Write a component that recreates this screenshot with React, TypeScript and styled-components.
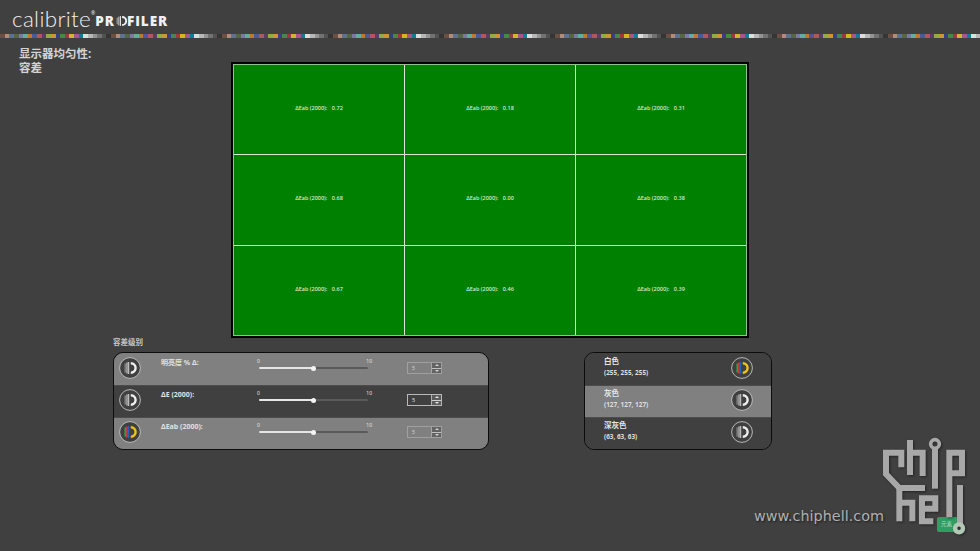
import React from 'react'
import styled, { createGlobalStyle } from 'styled-components'

const GlobalStyle = createGlobalStyle`
  html, body {
    margin: 0;
    padding: 0;
    height: 100%;
    background: #404040;
    overflow: hidden;
  }
  * {
    box-sizing: border-box;
  }
`

const CHECKER = [
  '#735244', '#c29682', '#627a9d', '#576c43', '#8580b1', '#67bdaa',
  '#d67e2c', '#505ba6', '#c15a63', '#5e3c6c', '#9dbc40', '#e0a32e',
  '#383d96', '#469449', '#af363c', '#e7c71f', '#bb5695', '#0885a1',
  '#f3f3f2', '#c8c8c8', '#a0a0a0', '#7a7a79', '#555555', '#343434',
]

const Page = styled.div`
  position: relative;
  width: 980px;
  height: 551px;
  background: #404040;
  color: #e4e4e4;
  font-family: 'Noto Sans', 'Noto Sans CJK SC', sans-serif;
  overflow: hidden;
`
const Header = styled.div`
  display: flex;
  align-items: baseline;
  height: 34px;
  padding: 5px 0 0 12px;
  color: #f0f0f0;
`
const BrandLight = styled.span`
  font-family: 'Lato', sans-serif;
  font-weight: 300;
  font-size: 22.4px;
  line-height: 27px;
  letter-spacing: 0.35px;
`
const BrandMark = styled.span`
  font-size: 5px;
  line-height: 6px;
  position: relative;
  top: -12px;
`
const BrandBold = styled.span`
  display: inline-flex;
  align-items: center;
  font-family: 'Open Sans', sans-serif;
  font-weight: 800;
  font-size: 13.5px;
  letter-spacing: 1px;
  align-self: center;
  margin-top: 3px;
`
const Strip = styled.div`
  display: flex;
  height: 4px;
  width: 999px;
  opacity: 0.88;
  filter: blur(0.4px);
`
const StripGroup = styled.div`
  display: flex;
  flex: 0 0 111px;
`
const Patch = styled.span<{ $c: string }>`
  flex: 1;
  background: ${p => p.$c};
`
const Main = styled.div`
  display: grid;
  grid-template-columns: 231px 518px;
`
const Heading = styled.h1`
  margin: 0;
  padding: 9px 0 0 19px;
  font-size: 11.5px;
  line-height: 14px;
  font-weight: 700;
  color: #d4d4d4;
`
const Uniformity = styled.div`
  display: grid;
  grid-template-columns: repeat(3, 1fr);
  grid-template-rows: repeat(3, 1fr);
  gap: 1px;
  width: 518px;
  height: 276px;
  margin-top: 24px;
  padding: 1px;
  border: 2px solid #000;
  background: #d8e8d8;
  box-shadow: inset 0 0 0 1px #8cc48c;
`
const Cell = styled.div`
  display: flex;
  align-items: center;
  justify-content: center;
  gap: 4.5px;
  padding-bottom: 3px;
  background: #008000;
  color: #deecde;
  font-size: 5.5px;
  font-weight: 500;
  white-space: pre;
`
const Bottom = styled.div`
  display: flex;
  align-items: flex-end;
  padding-left: 113px;
`
const LeftColumn = styled.div`
  width: 376px;
  margin-right: 95px;
`
const Caption = styled.div`
  font-size: 7.5px;
  line-height: 9px;
  font-weight: 700;
  color: #c4c4c4;
  margin-bottom: 5px;
`
const Panel = styled.div<{ $w: number }>`
  width: ${p => p.$w}px;
  height: 98px;
  border: 1.5px solid #0c0c0c;
  border-radius: 10px;
  overflow: hidden;
  display: flex;
  flex-direction: column;
`
const Row = styled.div<{ $on?: boolean }>`
  flex: 1;
  display: flex;
  align-items: flex-start;
  background: ${p => (p.$on ? '#808080' : '#404040')};
  & + & {
    box-shadow: inset 0 1px 0 #4c4c4c;
  }
`
const IconCell = styled.div`
  flex: 0 0 31px;
  display: flex;
  justify-content: center;
  padding-top: 4px;
  margin-right: 16px;
`
const RowLabel = styled.div`
  flex: 0 0 97px;
  padding-top: 5px;
  font-size: 7px;
  line-height: 10px;
  font-weight: 700;
  color: #e0e0e0;
`
const SliderBlock = styled.div`
  flex: 0 0 110px;
  padding: 4px 0 0 1px;
`
const SliderScale = styled.div`
  display: flex;
  justify-content: space-between;
  margin: 0 -4px 0 -2px;
  font-size: 5px;
  line-height: 8px;
  color: #e4e4e4;
`
const Track = styled.div`
  position: relative;
  height: 2px;
  margin-top: 2px;
  background: #5a5a5a;
  border-radius: 1px;
`
const TrackFill = styled.div`
  height: 2px;
  background: #e6e6e6;
  border-radius: 1px;
`
const Thumb = styled.div`
  position: absolute;
  top: -1.5px;
  width: 5px;
  height: 5px;
  margin-left: -2.5px;
  border-radius: 50%;
  background: #f4f4f4;
`
const Spinner = styled.div<{ $dim?: boolean }>`
  display: flex;
  width: 35px;
  height: 12px;
  margin: 9px 0 0 39px;
  border: 1px solid ${p => (p.$dim ? '#a8a8a8' : '#b8b8b8')};
  opacity: ${p => (p.$dim ? 0.8 : 1)};
`
const SpinValue = styled.div`
  flex: 1;
  padding-left: 4px;
  font-size: 5.5px;
  line-height: 10px;
  color: #e0e0e0;
`
const SpinArrows = styled.div`
  flex: 0 0 10px;
  display: flex;
  flex-direction: column;
  border-left: 1px solid #b0b0b0;
  background: #d0d0d0;
  gap: 1px;
`
const Arrow = styled.div<{ $down?: boolean }>`
  flex: 1;
  display: flex;
  align-items: center;
  justify-content: center;
  background: #5c5c5c;
  &::after {
    content: '';
    border-left: 2px solid transparent;
    border-right: 2px solid transparent;
    border-${p => (p.$down ? 'top' : 'bottom')}: 2.5px solid #e4e4e4;
  }
`
const SideRow = styled(Row)`
  padding-left: 19px;
`
const SideText = styled.div`
  flex: 1;
  padding-top: 3px;
`
const SideName = styled.div`
  font-size: 7.5px;
  line-height: 11px;
  font-weight: 700;
  color: #e6e6e6;
`
const SideValue = styled.div`
  font-size: 6.4px;
  line-height: 11px;
  font-weight: 700;
  color: #dedede;
`
const SideIcon = styled.div`
  flex: 0 0 40.5px;
  padding-top: 4px;
`
const Watermark = styled.div`
  position: absolute;
  left: 740px;
  top: 430px;
  width: 240px;
  height: 121px;
`
const LogoSvg = styled.svg`
  position: absolute;
  left: 0;
  top: 0;
  filter: drop-shadow(1px 1px 1px rgba(0, 0, 0, 0.45));
`
const WatermarkText = styled.div`
  position: absolute;
  left: 14px;
  top: 76px;
  font-family: 'DejaVu Sans', sans-serif;
  font-size: 14.4px;
  line-height: 20px;
  color: #b0b0b0;
  text-shadow: 1px 1px 2px #1c1c1c;
  white-space: nowrap;
`
const Badge = styled.div`
  position: absolute;
  left: 197px;
  top: 87px;
  width: 21px;
  height: 15px;
  padding-left: 4px;
  border-radius: 2px;
  background: #2f9e62;
  color: #b8dcc4;
  font-size: 5.5px;
  line-height: 14px;
`

const ToggleIcon = ({ colored }: { colored?: boolean }) => (
  <svg width="22" height="22" viewBox="0 0 22 22">
    <circle cx="11" cy="11" r="10.4" fill="#404040" stroke="#c4c4c4" strokeWidth="0.9" />
    <rect x="5.4" y="6.5" width="1.7" height="9" fill={colored ? '#2f9e44' : '#7c7c7c'} />
    <rect x="7.1" y="5.5" width="1.6" height="11" fill={colored ? '#d23b3b' : '#9c9c9c'} />
    <rect x="8.7" y="5" width="1.5" height="12" fill={colored ? '#2a62b8' : '#bcbcbc'} />
    <path
      d="M11.8 6.2a4.8 4.8 0 0 1 0 9.6"
      fill="none"
      stroke={colored ? '#f2c21c' : '#efefef'}
      strokeWidth="2.4"
    />
  </svg>
)

const ProfilerO = () => (
  <svg width="12" height="12" viewBox="0 0 22 22">
    <rect x="3" y="5" width="2" height="12" fill="#a8a8a8" />
    <rect x="6" y="3" width="2" height="16" fill="#c4c4c4" />
    <rect x="9" y="2" width="2" height="18" fill="#e0e0e0" />
    <path d="M13 3.5a7.5 7.5 0 0 1 0 15" fill="none" stroke="#f0f0f0" strokeWidth="3.6" />
  </svg>
)

const ChipHellLogo = () => (
  <LogoSvg width="240" height="121" viewBox="0 0 720 363" fill="none" stroke="#a8a8a8" strokeWidth="18">
    <path d="M484 112V68H438V132L478 174H555" />
    <path d="M478 174V274" />
    <path d="M510 30V135" />
    <path d="M510 68H548V138" />
    <path d="M478 218H517V274" />
    <path d="M580 274H546V205H586V236H546" />
    <path d="M585 57V176" />
    <circle cx="585" cy="42" r="13" strokeWidth="11" />
    <path d="M628 262V68H666V130H628" />
    <path d="M660 165V282" />
    <circle cx="657" cy="295" r="12" strokeWidth="13" stroke="#b4c8b8" />
  </LogoSvg>
)

const tolerance = [
  { label: '明亮度 % Δ:', on: true },
  { label: 'ΔE (2000):', on: false },
  { label: 'ΔEab (2000):', on: true, colored: true },
]
const greys = [
  { name: '白色', value: '(255, 255, 255)', colored: true },
  { name: '灰色', value: '(127, 127, 127)', on: true },
  { name: '深灰色', value: '(63, 63, 63)' },
]
const values = ['0.72', '0.18', '0.31', '0.68', '0.00', '0.38', '0.67', '0.46', '0.39']

export default function App() {
  return (
    <Page>
      <GlobalStyle />
      <Header>
        <BrandLight>calibrite</BrandLight>
        <BrandMark>®</BrandMark>
        <BrandBold>PR<ProfilerO />FILER</BrandBold>
      </Header>
      <Strip>
        {Array.from({ length: 9 }).map((_, i) => (
          <StripGroup key={i}>
            {CHECKER.map(c => <Patch key={c} $c={c} />)}
          </StripGroup>
        ))}
      </Strip>
      <Main>
        <Heading>显示器均匀性:<br />容差</Heading>
        <Uniformity>
          {values.map((v, i) => (
            <Cell key={i}>
              <span>ΔEab (2000):</span>
              <span>{v}</span>
            </Cell>
          ))}
        </Uniformity>
      </Main>
      <Bottom>
        <LeftColumn>
          <Caption>容差级别</Caption>
          <Panel $w={376}>
            {tolerance.map(t => (
              <Row key={t.label} $on={t.on}>
                <IconCell><ToggleIcon colored={t.colored} /></IconCell>
                <RowLabel>{t.label}</RowLabel>
                <SliderBlock>
                  <SliderScale><span>0</span><span>10</span></SliderScale>
                  <Track>
                    <TrackFill style={{ width: '50%' }} />
                    <Thumb style={{ left: '50%' }} />
                  </Track>
                </SliderBlock>
                <Spinner $dim={t.on}>
                  <SpinValue>5</SpinValue>
                  <SpinArrows>
                    <Arrow />
                    <Arrow $down />
                  </SpinArrows>
                </Spinner>
              </Row>
            ))}
          </Panel>
        </LeftColumn>
        <Panel $w={188}>
          {greys.map(g => (
            <SideRow key={g.name} $on={g.on}>
              <SideText>
                <SideName>{g.name}</SideName>
                <SideValue>{g.value}</SideValue>
              </SideText>
              <SideIcon><ToggleIcon colored={g.colored} /></SideIcon>
            </SideRow>
          ))}
        </Panel>
      </Bottom>
      <Watermark>
        <Badge>元素</Badge>
        <ChipHellLogo />
        <WatermarkText>www.chiphell.com</WatermarkText>
      </Watermark>
    </Page>
  )
}
